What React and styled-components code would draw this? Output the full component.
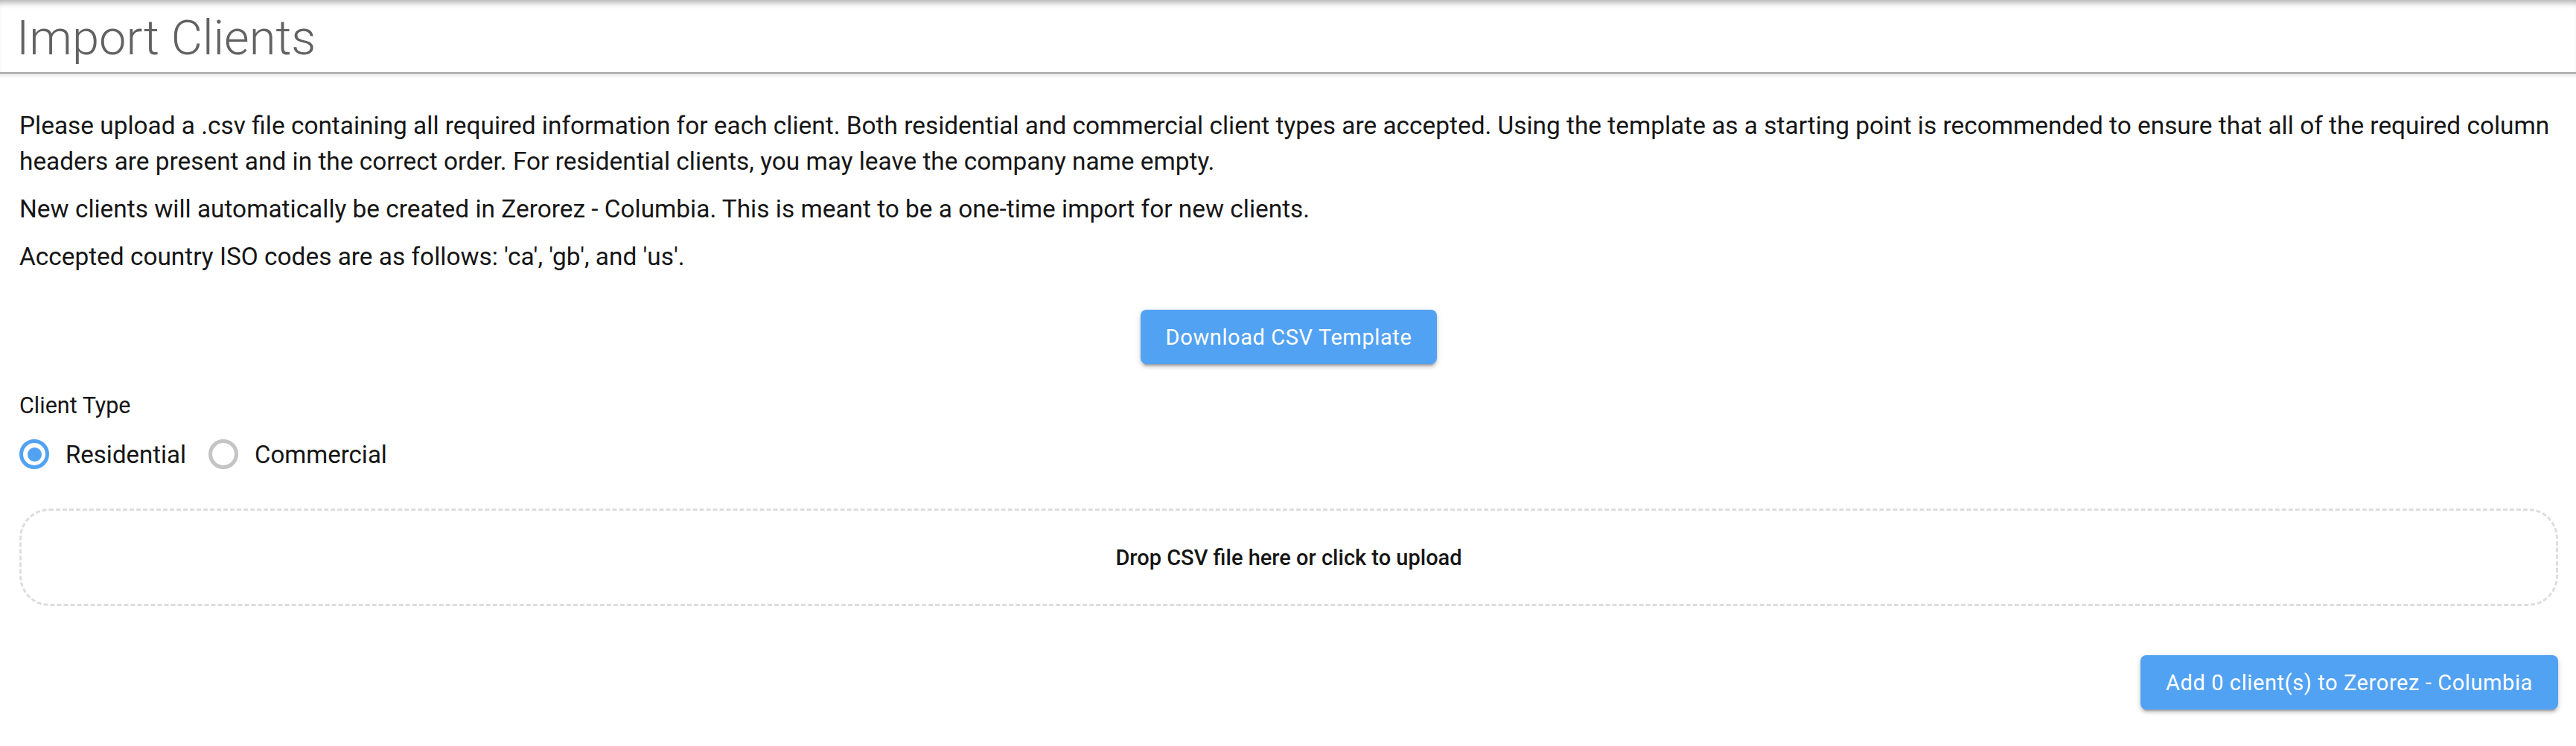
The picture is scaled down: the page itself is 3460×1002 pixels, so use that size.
import React, { useState } from 'react'
import styled, { createGlobalStyle } from 'styled-components'

const GlobalStyle = createGlobalStyle`
  html, body {
    margin: 0;
    padding: 0;
    background: #fff;
  }
  body {
    font-family: Roboto, "Noto Sans", "Liberation Sans", sans-serif;
    color: #161616;
  }
`

const BLUE = '#52a2f3'

const Page = styled.div`
  display: flex;
  flex-direction: column;
  min-height: 1002px;
`

const Header = styled.header`
  height: 97px;
  display: flex;
  align-items: center;
  padding: 0 22px;
  box-shadow: inset 0 9px 8px -6px rgba(0, 0, 0, 0.35);
  border-bottom: 2px solid #a6a6a6;
  position: relative;
  &::after {
    content: '';
    position: absolute;
    left: 0;
    right: 0;
    bottom: -8px;
    height: 6px;
    background: linear-gradient(rgba(0, 0, 0, 0.1), rgba(0, 0, 0, 0));
  }
`

const Title = styled.h1`
  margin: 0;
  padding-top: 4px;
  font-size: 65px;
  font-weight: 300;
  color: #626262;
`

const Content = styled.main`
  display: flex;
  flex-direction: column;
  padding: 46px 24px 0 26px;
`

const Para = styled.p`
  margin: 0 0 16px;
  font-size: 33.4px;
  line-height: 48px;
`

const Centered = styled.div`
  display: flex;
  justify-content: ${p => p.$align || 'center'};
  margin: ${p => p.$margin || '0'};
`

const Button = styled.button`
  height: 73px;
  padding: 0 34px;
  border: none;
  border-radius: 8px;
  background: ${BLUE};
  color: #fff;
  font-family: inherit;
  font-size: 29px;
  font-weight: 400;
  letter-spacing: 0.6px;
  cursor: pointer;
  box-shadow: 0 6px 2px -4px rgba(0, 0, 0, 0.2), 0 4px 4px 0 rgba(0, 0, 0, 0.14),
    0 2px 10px 0 rgba(0, 0, 0, 0.12);
`

const FieldLabel = styled.div`
  font-size: 30.5px;
  line-height: 40px;
  margin-top: 36px;
`

const RadioRow = styled.div`
  display: flex;
  align-items: center;
  gap: 30px;
  margin-top: 25px;
`

const RadioOption = styled.label`
  display: flex;
  align-items: center;
  gap: 22px;
  font-size: 33px;
  cursor: pointer;
`

const RadioCircle = styled.span`
  width: 40px;
  height: 40px;
  box-sizing: border-box;
  border-radius: 50%;
  border: 5px solid ${p => (p.$checked ? BLUE : '#c4c4c4')};
  display: flex;
  align-items: center;
  justify-content: center;
  &::after {
    content: '';
    width: 19px;
    height: 19px;
    border-radius: 50%;
    background: ${BLUE};
    display: ${p => (p.$checked ? 'block' : 'none')};
  }
`

const DropZone = styled.div`
  margin-top: 53px;
  height: 131px;
  box-sizing: border-box;
  border: 3px dashed #dddddd;
  border-radius: 40px;
  display: flex;
  align-items: center;
  justify-content: center;
  font-size: 29px;
  font-weight: 500;
  cursor: pointer;
`

export default function App() {
  const [type, setType] = useState('residential')
  const company = 'Zerorez - Columbia'

  return (
    <Page>
      <GlobalStyle />
      <Header>
        <Title>Import Clients</Title>
      </Header>
      <Content>
        <Para>
          Please upload a .csv file containing all required information for each client. Both residential and
          commercial client types are accepted. Using the template as a starting point is recommended to ensure
          that all of the required column headers are present and in the correct order. For residential clients,
          you may leave the company name empty.
        </Para>
        <Para>
          New clients will automatically be created in {company}. This is meant to be a one-time import for new
          clients.
        </Para>
        <Para>Accepted country ISO codes are as follows: 'ca', 'gb', and 'us'.</Para>
        <Centered $margin="31px 0 0">
          <Button>Download CSV Template</Button>
        </Centered>
        <FieldLabel>Client Type</FieldLabel>
        <RadioRow>
          <RadioOption onClick={() => setType('residential')}>
            <RadioCircle $checked={type === 'residential'} />
            Residential
          </RadioOption>
          <RadioOption onClick={() => setType('commercial')}>
            <RadioCircle $checked={type === 'commercial'} />
            Commercial
          </RadioOption>
        </RadioRow>
        <DropZone>Drop CSV file here or click to upload</DropZone>
        <Centered $align="flex-end" $margin="66px 0 0">
          <Button>Add 0 client(s) to {company}</Button>
        </Centered>
      </Content>
    </Page>
  )
}
